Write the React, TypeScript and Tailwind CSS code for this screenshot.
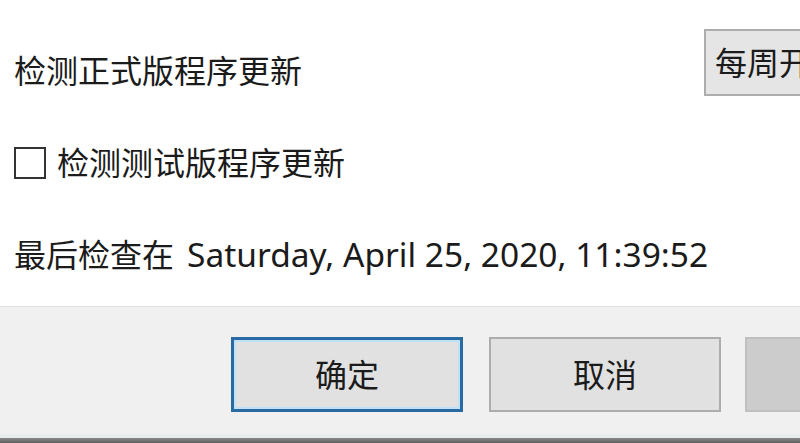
export default function App() {
  return (
    <div className="w-[800px] h-[443px] overflow-hidden flex flex-col bg-white text-[#1b1b1b] font-['Noto_Sans','Noto_Sans_CJK_SC',sans-serif]">
      {/* settings body */}
      <div className="h-[306px] shrink-0 pl-[14px] flex flex-col">
        <div className="mt-[29px] h-[67px] flex items-center">
          <span className="w-[690px] shrink-0 mt-[16px] text-[32px] leading-none">检测正式版程序更新</span>
          <div className="h-[67px] w-[120px] shrink-0 flex items-center pl-[9px] bg-[#e5e5e5] border-2 border-r-0 border-[#adadad] text-[32px] leading-none whitespace-nowrap overflow-hidden">
            每周开始时检查
          </div>
        </div>

        <label className="mt-[50px] h-[34px] flex items-center">
          <span className="w-[32px] h-[32px] border-2 border-[#333] bg-white shrink-0" />
          <span className="ml-[11px] text-[32px] leading-none">检测测试版程序更新</span>
        </label>

        <div className="mt-[55px] h-[40px] flex items-center whitespace-nowrap text-[32px] leading-none">
          <span>最后检查在</span>
          <span className="ml-[13px] text-[33.5px]">Saturday, April 25, 2020, 11:39:52</span>
        </div>
      </div>

      {/* footer */}
      <div className="border-t border-[#dfdfdf] bg-[#f0f0f0] h-[128px] shrink-0 flex items-start pt-[30px] pl-[231px]">
        <button className="w-[232px] h-[75px] shrink-0 bg-[#e1e1e1] border-[3px] border-[#2a6aa3] shadow-[inset_0_0_0_2px_#bfe1f8] text-[32px] leading-none flex items-center justify-center">
          确定
        </button>
        <button className="ml-[26px] w-[232px] h-[75px] shrink-0 bg-[#e1e1e1] border-2 border-[#adadad] text-[32px] leading-none flex items-center justify-center">
          取消
        </button>
        <button
          aria-label="应用"
          className="ml-[24px] w-[60px] h-[75px] shrink-0 bg-[#cccccc] border-2 border-r-0 border-[#bfbfbf]"
        />
      </div>
      <div className="h-[4px] shrink-0 bg-[#e7ebeb]" />
      <div className="flex-1 bg-gradient-to-b from-[#8a8a8a] to-[#5e5e5e]" />
    </div>
  );
}
